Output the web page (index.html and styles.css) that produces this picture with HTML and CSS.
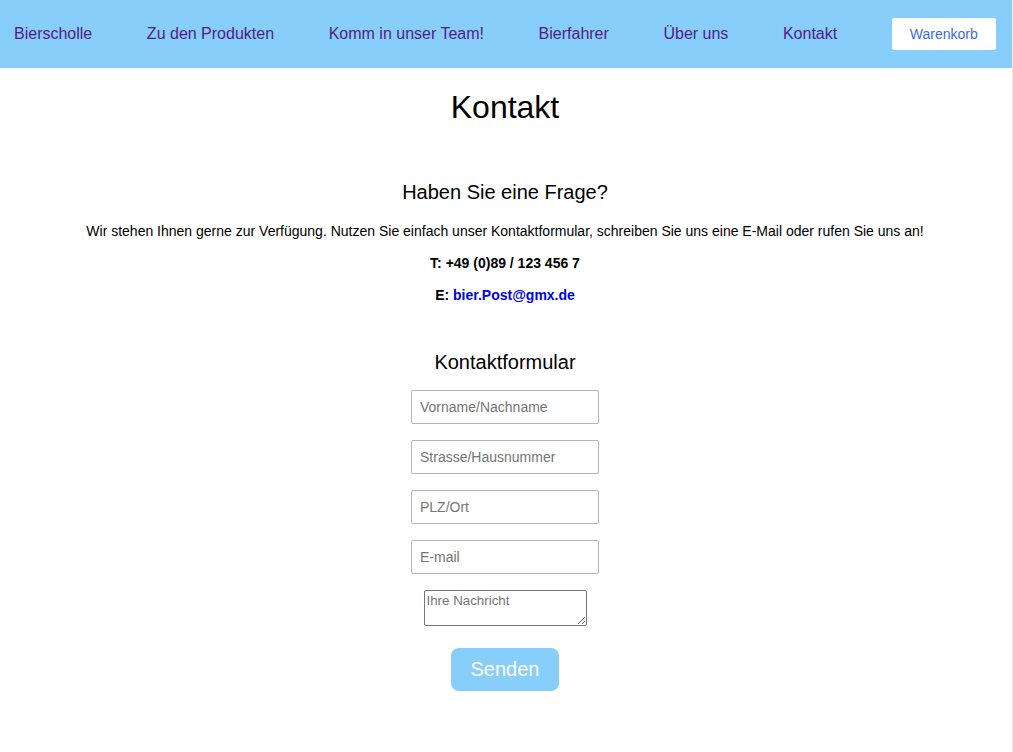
FILE: index.html
```html
<!DOCTYPE html>
<html lang="de">
<head>
<meta charset="utf-8">
<title>Kontakt</title>
<link rel="stylesheet" href="styles.css">
</head>
<body>
<header class="topbar">
  <nav class="nav">
    <a class="nav-link" href="#">Bierscholle</a>
    <a class="nav-link" href="#">Zu den Produkten</a>
    <a class="nav-link" href="#">Komm in unser Team!</a>
    <a class="nav-link" href="#">Bierfahrer</a>
    <a class="nav-link" href="#">Über uns</a>
    <a class="nav-link" href="#">Kontakt</a>
    <button class="cart-btn" type="button">Warenkorb</button>
  </nav>
</header>
<main class="content">
  <h1 class="page-title">Kontakt</h1>
  <section class="info">
    <h2 class="section-title">Haben Sie eine Frage?</h2>
    <p class="text">Wir stehen Ihnen gerne zur Verfügung. Nutzen Sie einfach unser Kontaktformular, schreiben Sie uns eine E-Mail oder rufen Sie uns an!</p>
    <p class="text strong">T: +49 (0)89 / 123 456 7</p>
    <p class="text strong">E: <a class="mail" href="#">bier.Post@gmx.de</a></p>
  </section>
  <section class="form-section">
    <h2 class="section-title form-title">Kontaktformular</h2>
    <form class="form">
      <input class="field" type="text" placeholder="Vorname/Nachname">
      <input class="field" type="text" placeholder="Strasse/Hausnummer">
      <input class="field" type="text" placeholder="PLZ/Ort">
      <input class="field" type="email" placeholder="E-mail">
      <textarea class="message" placeholder="Ihre Nachricht"></textarea>
      <button class="send" type="button">Senden</button>
    </form>
  </section>
</main>
</body>
</html>
```
FILE: styles.css
```css
html, body {
  margin: 0;
  padding: 0;
  background: #ffffff;
}
body {
  font-family: "Liberation Sans", Arial, sans-serif;
  color: #000;
  border-right: 1px solid #ececec;
  min-height: 752px;
  box-sizing: border-box;
}
.topbar {
  background: #87cefa;
  height: 68px;
  display: flex;
  align-items: center;
  padding: 0 16px 0 14px;
}
.nav {
  display: flex;
  align-items: center;
  gap: 54.6px;
}
.nav-link {
  font-size: 16px;
  color: #551a8b;
  text-decoration: none;
  white-space: nowrap;
  flex-shrink: 0;
}
.cart-btn {
  font-family: "Liberation Sans", Arial, sans-serif;
  font-size: 14px;
  color: #4169e1;
  background: #fff;
  border: none;
  border-radius: 2px;
  width: 104px;
  height: 32px;
  padding: 0;
  flex-shrink: 0;
}
.content {
  text-align: center;
  padding-right: 2px;
}
.page-title {
  font-size: 32px;
  font-weight: normal;
  margin: 21px 0 0;
  line-height: 37px;
}
.info {
  padding-top: 55px;
}
.section-title {
  font-size: 20px;
  font-weight: normal;
  line-height: 23px;
  margin: 0 0 19px;
}
.text {
  font-size: 14px;
  line-height: 16px;
  margin: 0 0 16px;
}
.strong {
  font-weight: bold;
}
.mail {
  color: #0000ee;
  text-decoration: none;
}
.form-section {
  padding-top: 32px;
}
.form-title {
  margin-bottom: 16px;
}
.form {
  display: flex;
  flex-direction: column;
  align-items: center;
  gap: 16px;
}
.field {
  box-sizing: border-box;
  width: 188px;
  height: 34px;
  border: 1px solid #b5b5b5;
  border-radius: 2px;
  padding: 0 8px;
  font-family: "Liberation Sans", Arial, sans-serif;
  font-size: 14px;
  margin: 0;
}
.field::placeholder,
.message::placeholder {
  color: #757575;
}
.message {
  box-sizing: border-box;
  width: 163px;
  height: 36px;
  border: 1px solid #767676;
  border-radius: 2px;
  padding: 2px;
  font-family: "Liberation Sans", Arial, sans-serif;
  font-size: 13.333px;
  margin: 0 0 6px;
}
.send {
  width: 108px;
  height: 43px;
  background: #87cefa;
  color: #fff;
  border: none;
  border-radius: 8px;
  font-family: "Liberation Sans", Arial, sans-serif;
  font-size: 20px;
  padding: 0;
}
```
